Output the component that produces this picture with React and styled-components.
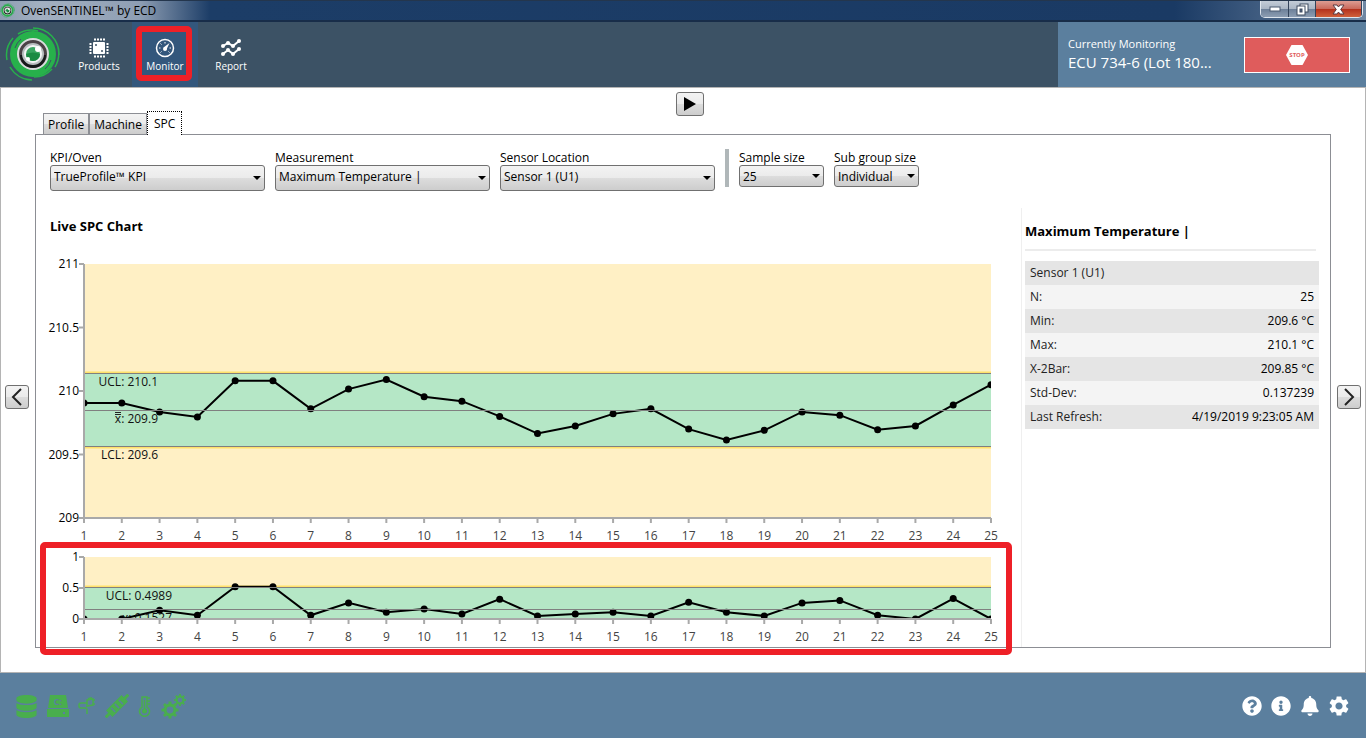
import { useState } from "react";
import styled, { createGlobalStyle } from "styled-components";
import { FaBell, FaDatabase, FaInfoCircle, FaQuestionCircle } from "react-icons/fa";
import { MdSettings } from "react-icons/md";

const TEMPERATURES = [
  209.905, 209.905, 209.835, 209.795, 210.08, 210.08, 209.86, 210.015, 210.09, 209.955, 209.92, 209.8, 209.665,
  209.725, 209.82, 209.86, 209.7, 209.615, 209.69, 209.835, 209.81, 209.695, 209.725, 209.89, 210.05,
];
const RANGES = [
  0, 0, 0.14, 0.06, 0.52, 0.52, 0.06, 0.26, 0.11, 0.16, 0.08, 0.32, 0.05, 0.08, 0.11, 0.05, 0.27, 0.11, 0.05, 0.26,
  0.3, 0.06, 0, 0.33, 0,
];
const STATS = [
  ["N:", "25"],
  ["Min:", "209.6 °C"],
  ["Max:", "210.1 °C"],
  ["X-2Bar:", "209.85 °C"],
  ["Std-Dev:", "0.137239"],
  ["Last Refresh:", "4/19/2019 9:23:05 AM"],
];

const LEFT = 48;
const RIGHT = 955;

export default function App() {
  const [tab, setTab] = useState("SPC");

  return (
    <Page>
      <GlobalStyle />
      <TitleBar>
        <Logo size={15} />
        <Title>OvenSENTINEL™ by ECD</Title>
        <WindowButtons>
          <WindowButton aria-label="Minimize" $width={28}>
            <svg width="12" height="6">
              <rect x="1" y="1" width="10" height="4" fill="#fff" stroke="#4b5a70" />
            </svg>
          </WindowButton>
          <WindowButton aria-label="Restore" $width={27}>
            <svg width="13" height="13">
              <rect x="4" y="1" width="8" height="8" fill="#fff" stroke="#3f4c60" />
              <rect x="1" y="3" width="8" height="9" fill="#fff" stroke="#3f4c60" />
              <rect x="4" y="6" width="2" height="3" fill="#4f6282" stroke="#3f4c60" />
            </svg>
          </WindowButton>
          <WindowButton aria-label="Close" $width={46} $close>
            <svg width="13" height="11">
              <path d="M1 1h4l1.500 2L8 1h4L8.700 5.500 12 10H8L6.500 8 5 10H1l3.300-4.500z" fill="#fff" stroke="#5a3a42" />
            </svg>
          </WindowButton>
        </WindowButtons>
      </TitleBar>

      <Header>
        <Brand>
          <Logo size={56} />
        </Brand>
        <Nav>
          <NavButton>
            <ChipIcon />
            Products
          </NavButton>
          <NavButton $active>
            <GaugeIcon />
            Monitor
            <Highlight $inset="4px 6px 6px 4px" />
          </NavButton>
          <NavButton>
            <ReportIcon />
            Report
          </NavButton>
        </Nav>
        <Monitoring>
          <div>
            <MonitoringLabel>Currently Monitoring</MonitoringLabel>
            <MonitoringName>ECU 734-6 (Lot 180...</MonitoringName>
          </div>
          <StopButton aria-label="Stop">
            <svg width="22" height="22" viewBox="0 0 22 22">
              <path d="M5.500 1h11L22 11l-5.500 10h-11L0 11z" fill="#fff" />
              <text x="11" y="13" textAnchor="middle" fontSize="6" fontWeight="700" fill="#df5c5c">
                STOP
              </text>
            </svg>
          </StopButton>
        </Monitoring>
      </Header>

      <Main>
        <PlayButton aria-label="Play">
          <svg width="14" height="14">
            <path d="M1 0v14l12-7z" />
          </svg>
        </PlayButton>
        <Tabs role="tablist">
          {["Profile", "Machine", "SPC"].map((name) => (
            <Tab key={name} role="tab" aria-selected={tab === name} $active={tab === name} onClick={() => setTab(name)}>
              {name}
            </Tab>
          ))}
        </Tabs>
        <ArrowButton aria-label="Previous" $side="start">
          <svg width="12" height="18" fill="none" stroke="#222" strokeWidth="2">
            <path d="M10 1L2 9l8 8" />
          </svg>
        </ArrowButton>
        <Panel>
          <Filters>
            <Field id="kpi" label="KPI/Oven" options={["TrueProfile™ KPI"]} />
            <Field id="measurement" label="Measurement" options={["Maximum Temperature |"]} />
            <Field id="sensor" label="Sensor Location" options={["Sensor 1 (U1)"]} />
            <Divider />
            <Field id="sample" label="Sample size" options={["25"]} small />
            <Field id="subgroup" label="Sub group size" options={["Individual"]} small />
          </Filters>
          <Columns>
            <Charts>
              <ChartTitle>Live SPC Chart</ChartTitle>
              <ControlChart
                name="individuals"
                data={TEMPERATURES}
                height={295}
                top={14}
                bottom={268}
                min={209}
                max={211}
                ticks={[209, 209.5, 210, 210.5, 211]}
                ucl={210.14}
                lcl={209.565}
                mean={209.85}
                uclLabel="UCL: 210.1"
                lclLabel="LCL: 209.6"
                meanLabel="x: 209.9"
                labelX={122}
              />
              <RangeBox>
                <ControlChart
                  name="ranges"
                  data={RANGES}
                  height={102}
                  top={12}
                  bottom={74}
                  min={0}
                  max={1}
                  ticks={[0, 0.5, 1]}
                  ucl={0.51}
                  mean={0.155}
                  uclLabel="UCL: 0.4989"
                  meanLabel="x: 0.1527"
                  labelX={136}
                />
                <Highlight $inset="-3px 9px -8px 4px" />
              </RangeBox>
            </Charts>
            <Side>
              <SideTitle>Maximum Temperature |</SideTitle>
              <Stats>
                <tbody>
                  <tr>
                    <th colSpan={2}>Sensor 1 (U1)</th>
                  </tr>
                  {STATS.map(([label, value]) => (
                    <tr key={label}>
                      <th scope="row">{label}</th>
                      <td>{value}</td>
                    </tr>
                  ))}
                </tbody>
              </Stats>
            </Side>
          </Columns>
        </Panel>
        <ArrowButton aria-label="Next" $side="end">
          <svg width="12" height="18" fill="none" stroke="#222" strokeWidth="2">
            <path d="M2 1l8 8-8 8" />
          </svg>
        </ArrowButton>
      </Main>

      <Footer>
        <StatusIcons>
          <FaDatabase size={23} />
          <DriveIcon />
          <PlugIcon />
          <ConnectorIcon />
          <ThermometerIcon />
          <GearsIcon />
        </StatusIcons>
        <FooterActions>
          <IconButton aria-label="Help">
            <FaQuestionCircle size={20} />
          </IconButton>
          <IconButton aria-label="Information">
            <FaInfoCircle size={20} />
          </IconButton>
          <IconButton aria-label="Notifications">
            <FaBell size={20} />
          </IconButton>
          <IconButton aria-label="Settings">
            <MdSettings size={24} />
          </IconButton>
        </FooterActions>
      </Footer>
    </Page>
  );
}

const Field = ({ id, label, options, small }) => (
  <FieldBox $small={small}>
    <label htmlFor={id}>{label}</label>
    <SelectBox $small={small}>
      <Select id={id} $small={small}>
        {options.map((option) => (
          <option key={option}>{option}</option>
        ))}
      </Select>
    </SelectBox>
  </FieldBox>
);

const ControlChart = ({
  name,
  data,
  height,
  top,
  bottom,
  min,
  max,
  ticks,
  ucl,
  lcl = min,
  mean,
  uclLabel,
  lclLabel,
  meanLabel,
  labelX,
}) => {
  const x = (i) => LEFT + (i * (RIGHT - LEFT)) / (data.length - 1);
  const y = (value) => bottom - ((value - min) / (max - min)) * (bottom - top);
  const line = (value) => Math.round(y(value)) + 0.5;
  const hasLower = lcl > min;

  return (
    <ChartSvg viewBox={`0 0 985 ${height}`} role="img" aria-label={name}>
      <clipPath id={name}>
        <rect x={LEFT} y={top} width={RIGHT - LEFT} height={bottom - top} />
      </clipPath>
      <rect x={LEFT} y={top} width={RIGHT - LEFT} height={bottom - top} fill="#fff0c5" />
      <rect x={LEFT} y={y(ucl)} width={RIGHT - LEFT} height={y(lcl) - y(ucl)} fill="#b5e7c6" />
      <rect x={LEFT} y={line(ucl) - 2} width={RIGHT - LEFT} height="2" fill="#ffe16b" />
      {hasLower && <rect x={LEFT} y={line(lcl)} width={RIGHT - LEFT} height="2" fill="#ffe16b" />}
      <g clipPath={`url(#${name})`}>
        <polyline
          points={data.map((value, i) => `${x(i)},${y(value)}`).join(" ")}
          fill="none"
          stroke="#000"
          strokeWidth="2"
        />
        {data.map((value, i) => (
          <circle key={i} cx={x(i)} cy={y(value)} r="3.500" />
        ))}
        <g textAnchor="end" fill="#111">
          <text x={labelX} y={line(ucl) + 12}>
            {uclLabel}
          </text>
          <text x={labelX} y={line(mean) + 12}>
            {meanLabel}
          </text>
          {hasLower && (
            <text x={labelX} y={line(lcl) + 12}>
              {lclLabel}
            </text>
          )}
        </g>
        {hasLower && <path d={`M79 ${line(mean) + 2}h6m-6 2h6`} stroke="#222" />}
      </g>
      <g stroke="#808080">
        <path d={`M${LEFT} ${line(ucl)}H${RIGHT}M${LEFT} ${line(mean)}H${RIGHT}`} />
        {hasLower && <path d={`M${LEFT} ${line(lcl)}H${RIGHT}`} />}
      </g>
      <path d={`M${LEFT} ${top}V${bottom}H${RIGHT}`} fill="none" stroke="#a9a9a9" strokeWidth="2" />
      {ticks.map((tick) => (
        <g key={tick}>
          <path d={`M${LEFT - 5} ${y(tick)}h5`} stroke="#a9a9a9" strokeWidth="2" />
          <text x={LEFT - 5} y={y(tick) + 4} textAnchor="end">
            {tick}
          </text>
        </g>
      ))}
      {data.map((_, i) => (
        <g key={i}>
          <path d={`M${x(i)} ${bottom}v5`} stroke="#a9a9a9" strokeWidth="2" />
          <text x={x(i)} y={bottom + 22} textAnchor="middle" fill="#444">
            {i + 1}
          </text>
        </g>
      ))}
    </ChartSvg>
  );
};

const Logo = ({ size }) => (
  <svg width={size} height={size} viewBox="0 0 56 56" fill="none">
    <circle cx="28" cy="28" r="19" stroke="#27b14b" strokeWidth="8" />
    <path
      d="M28 2A26 26 0 0 1 54 29M50 14A26 26 0 0 1 50 41M27 54A26 26 0 0 1 5 41M2 34A26 26 0 0 1 8 12M13 8A25 25 0 0 1 33 5M47 43A24 24 0 0 1 29 51"
      stroke="#27b14b"
      strokeWidth="1.500"
    />
    <path d="M10 22A19 19 0 0 1 16 13M46 34A19 19 0 0 1 40 43" stroke="#3c5265" />
    <circle cx="28" cy="28" r="15" fill="#4b4246" stroke="#d9dcdd" strokeWidth="2" />
    <path d="M15 29a13 13 0 0 0 26 0z" fill="#17191b" />
    <circle cx="28" cy="28" r="10" fill="#f3f5f5" stroke="#b9bec0" strokeWidth="2" />
    <circle cx="28" cy="28" r="7" fill="#3aa561" />
    <path d="M21 28a7 7 0 0 0 14 0q-7-3-14 0z" fill="#1b8a43" />
    <circle cx="33" cy="23" r="3" fill="#fff" />
    <circle cx="23" cy="33" r="2" fill="#fff" />
  </svg>
);

const ChipIcon = () => (
  <svg width="20" height="20" viewBox="0 0 20 20">
    <rect x="4" y="4" width="12" height="12" rx="1" fill="#fff" />
    <path d="M5 1.500h11M5 18.500h11M1.500 5v11M18.500 5v11" stroke="#fff" strokeWidth="2" strokeDasharray="2 1" />
    <circle cx="7" cy="7" r="1" fill="#3c5265" />
    <circle cx="13" cy="13" r="1" fill="#3c5265" />
  </svg>
);

const GaugeIcon = () => (
  <svg width="20" height="20" viewBox="0 0 20 20" fill="none" stroke="#fff">
    <circle cx="10" cy="10" r="8.500" strokeWidth="1.500" />
    <path d="M4 10h1.500M5.500 5.500l1 1M10 4v1.500M16 10h-1.500M5.500 14.500l1-1M14.500 14.500l-1-1" />
    <path d="M14.500 5l-3 6.500-3-2z" fill="#fff" stroke="none" />
    <circle cx="10" cy="11" r="2" fill="#fff" stroke="none" />
  </svg>
);

const ReportIcon = () => (
  <svg width="20" height="20" viewBox="0 0 20 20" fill="#fff">
    <path d="M2 8l5-3 5 3 6-5M2 16l5-4 5 4 6-5" fill="none" stroke="#fff" strokeWidth="2" />
    {[
      [2, 8],
      [7, 5],
      [12, 8],
      [18, 3],
      [2, 16],
      [7, 12],
      [12, 16],
      [18, 11],
    ].map(([cx, cy]) => (
      <circle key={`${cx}-${cy}`} cx={cx} cy={cy} r="2" />
    ))}
  </svg>
);

const DriveIcon = () => (
  <svg width="22" height="22" viewBox="0 0 22 22">
    <path d="M3 0h16l2 13H1zM0 14h22v8H0z" />
    <text x="11" y="10" textAnchor="middle" fontSize="9" fontWeight="700" fill="#5b7f9e">
      C:
    </text>
    <path d="M16 18h2" stroke="#5b7f9e" strokeWidth="2" />
  </svg>
);

const PlugIcon = () => (
  <svg width="18" height="18" viewBox="0 0 18 18" fill="none" stroke="currentColor" strokeWidth="1.500">
    <path d="M9 6H3a2 2 0 0 0-2 2v1q0 2 2 2h4q2 0 2 2v4M9 3l6-1v6l-6 1zM15 3h2M15 7h2" />
    <path d="M10 2l4-1" strokeWidth="2" />
  </svg>
);

const ConnectorIcon = () => (
  <svg width="24" height="24" viewBox="0 0 24 24">
    <g transform="rotate(-45 12 12)">
      <path d="M-4 10.500h5v-3h22v3h5v3h-5v3H1v-3h-5z" />
      <path d="M6.500 9v6M12 9v6M17.500 9v6" stroke="#5b7f9e" strokeWidth="1.500" />
    </g>
  </svg>
);

const ThermometerIcon = () => (
  <svg width="14" height="22" viewBox="0 0 14 22" fill="none" stroke="currentColor" strokeWidth="1.500">
    <path d="M4 2h5v10a5 5 0 1 1-5 0zM6.500 5v10M9 3h3M9 6h3M9 9h3" />
    <circle cx="6.500" cy="16" r="2.500" fill="currentColor" stroke="none" />
  </svg>
);

const Gear = ({ cx, cy, r }) => (
  <g transform={`translate(${cx} ${cy})`}>
    <circle r={r * 0.58} strokeWidth={r * 0.36} />
    {[0, 45, 90, 135, 180, 225, 270, 315].map((angle) => (
      <path key={angle} d={`M0 ${-r * 0.7}V${-r}`} strokeWidth={r * 0.34} transform={`rotate(${angle})`} />
    ))}
  </g>
);

const GearsIcon = () => (
  <svg width="26" height="26" viewBox="0 0 26 26" fill="none" stroke="currentColor">
    <Gear cx={9} cy={17} r={8.5} />
    <Gear cx={19} cy={7} r={6} />
  </svg>
);

const GlobalStyle = createGlobalStyle`
  * {
    box-sizing: border-box;
  }
  body {
    margin: 0;
    color: #000;
    font-family: "Open Sans", "Noto Sans", sans-serif;
    font-size: 12px;
    line-height: 16px;
  }
  button,
  select {
    color: inherit;
    font: inherit;
  }
`;

const Page = styled.div`
  display: flex;
  flex-direction: column;
  min-height: 100vh;
  background-color: #5b7f9e;
`;

const TitleBar = styled.div`
  display: flex;
  align-items: center;
  gap: 6px;
  height: 22px;
  border-top: 1px solid #24364d;
  border-bottom: 2px solid #182d49;
  background: linear-gradient(90deg, #8d9db2, #a3b0c1 40px, #8e9eb3 140px, #1c3d67 210px, #1a3a64 86%, #6f87a3);
`;

const Title = styled.div`
  flex: 1;
`;

const WindowButtons = styled.div`
  display: flex;
  align-self: flex-start;
  margin-right: 3px;
  border: 1px solid #dfe6ee;
  border-top: none;
  border-radius: 0 0 5px 5px;
  overflow: hidden;
`;

const WindowButton = styled.button`
  display: flex;
  align-items: center;
  justify-content: center;
  width: ${({ $width }) => $width}px;
  height: 16px;
  padding: 0;
  border: none;
  border-right: 1px solid #33435a;
  background: ${({ $close }) =>
    $close
      ? "linear-gradient(#dd9d93, #c9685a 50%, #b3301c 50%, #d0603a)"
      : "linear-gradient(#c3ccd7, #a9b5c4 50%, #6c7f98 50%, #8c9db2)"};
`;

const Header = styled.header`
  display: flex;
  height: 65px;
  background-color: #3c5265;
`;

const Brand = styled.div`
  display: flex;
  align-items: center;
  padding: 0 5px 2px;
`;

const Nav = styled.nav`
  display: flex;
  flex: 1;
`;

const NavButton = styled.button`
  position: relative;
  display: flex;
  flex-direction: column;
  align-items: center;
  width: 66px;
  padding: 16px 0 0;
  border: none;
  color: white;
  font-size: 10px;
  font-weight: 500;
  background-color: ${({ $active }) => ($active ? "#33577c" : "transparent")};
`;

const Highlight = styled.div`
  position: absolute;
  inset: ${({ $inset }) => $inset};
  border: 6px solid #ee2027;
  border-radius: 5px;
  pointer-events: none;
`;

const Monitoring = styled.div`
  display: flex;
  align-items: center;
  justify-content: space-between;
  width: 308px;
  padding: 0 16px 0 10px;
  color: white;
  background-color: #5b7f9e;
`;

const MonitoringLabel = styled.div`
  font-size: 11px;
`;

const MonitoringName = styled.div`
  padding-bottom: 2px;
  font-size: 15px;
  line-height: 20px;
`;

const StopButton = styled.button`
  display: flex;
  align-items: center;
  justify-content: center;
  width: 106px;
  height: 36px;
  padding: 0;
  border: 1px solid white;
  background-color: #df5c5c;
`;

const Main = styled.main`
  display: grid;
  flex: 1;
  grid-template-columns: 34px minmax(0, 1fr) 34px;
  grid-template-rows: 46px auto;
  align-items: start;
  padding-bottom: 24px;
  border: 1px solid #b4b4b4;
  background-color: white;
`;

const GreyButton = styled.button`
  display: flex;
  align-items: center;
  justify-content: center;
  height: 24px;
  padding: 0;
  border: 1px solid #707070;
  border-radius: 3px;
  background: linear-gradient(#f3f3f3, #ebebeb 50%, #dddddd 50%, #cdcdcd);
`;

const PlayButton = styled(GreyButton)`
  grid-row: 1;
  grid-column: 1 / -1;
  justify-self: center;
  width: 28px;
  margin: 4px 0 0 14px;
`;

const ArrowButton = styled(GreyButton)`
  grid-row: 2;
  align-self: center;
  justify-self: ${({ $side }) => $side};
  width: 24px;
  margin: 12px 4px 0;
`;

const Tabs = styled.div`
  z-index: 1;
  display: flex;
  grid-row: 1;
  grid-column: 2;
  align-items: flex-end;
  align-self: end;
  justify-self: start;
  margin-left: 8px;
`;

const Tab = styled.button`
  height: ${({ $active }) => ($active ? 24 : 21)}px;
  margin-bottom: ${({ $active }) => ($active ? -1 : 0)}px;
  padding: ${({ $active }) => ($active ? "0 6px" : "2px 4px 0")};
  border: 1px ${({ $active }) => ($active ? "dotted #000" : "solid #8c8e94")};
  border-bottom: none;
  background: ${({ $active }) =>
    $active ? "white" : "linear-gradient(#f3f3f3, #ebebeb 50%, #dddddd 50%, #cdcdcd)"};
`;

const Panel = styled.section`
  grid-row: 2;
  grid-column: 2;
  border: 1px solid #8c8e94;
`;

const Filters = styled.div`
  display: flex;
  flex-wrap: wrap;
  gap: 10px;
  padding: 14px 14px 0;
`;

const FieldBox = styled.div`
  width: ${({ $small }) => ($small ? 85 : 215)}px;

  label {
    display: block;
    height: 16px;
    line-height: 18px;
  }
`;

const SelectBox = styled.div`
  position: relative;

  &::after {
    content: "";
    position: absolute;
    top: ${({ $small }) => ($small ? 9 : 11)}px;
    right: 4px;
    border: 4px solid transparent;
    border-top-color: #000;
    pointer-events: none;
  }
`;

const Select = styled.select`
  display: block;
  width: 100%;
  height: ${({ $small }) => ($small ? 22 : 26)}px;
  padding: ${({ $small }) => ($small ? "1px 12px 0 3px" : "0 12px 2px 3px")};
  border: 1px solid #707070;
  border-radius: 3px;
  appearance: none;
  background: linear-gradient(#f3f3f3, #ebebeb 50%, #dddddd 50%, #cdcdcd);
`;

const Divider = styled.div`
  width: 4px;
  height: 38px;
  background-color: #b0b7b9;
`;

const Columns = styled.div`
  display: grid;
  grid-template-columns: minmax(0, 1fr) 309px;
  margin-top: 17px;
`;

const Charts = styled.div`
  padding-top: 10px;
`;

const ChartTitle = styled.h2`
  margin: 0;
  padding: 0 14px 16px;
  font-size: 13px;
  line-height: 16px;
`;

const ChartSvg = styled.svg`
  display: block;
  width: 100%;
`;

const RangeBox = styled.div`
  position: relative;
`;

const Side = styled.aside`
  padding: 15px 11px 0 3px;
  border-left: 1px solid #efefef;
`;

const SideTitle = styled.h2`
  margin: 0 3px 10px 0;
  padding-bottom: 10px;
  border-bottom: 2px solid #ececec;
  font-size: 13px;
  line-height: 16px;
`;

const Stats = styled.table`
  width: 100%;
  border-collapse: collapse;

  tr {
    height: 24px;
    background-color: #f4f4f4;
  }
  tr:nth-child(odd) {
    background-color: #e5e5e5;
  }
  th {
    padding: 0 5px;
    color: #222;
    font-weight: normal;
    text-align: left;
  }
  td {
    padding: 0 5px;
    text-align: right;
  }
`;

const Footer = styled.footer`
  display: flex;
  align-items: center;
  justify-content: space-between;
  height: 66px;
  padding: 0 17px 0 15px;
`;

const StatusIcons = styled.div`
  display: flex;
  align-items: center;
  gap: 9px;
  color: #49ae4d;

  svg {
    fill: currentColor;
  }
  svg[fill="none"] {
    fill: none;
  }
`;

const FooterActions = styled.div`
  display: flex;
  align-items: center;
  gap: 9px;
`;

const IconButton = styled.button`
  display: flex;
  align-items: center;
  justify-content: center;
  width: 20px;
  padding: 0;
  border: none;
  color: white;
  background: none;

  svg {
    flex-shrink: 0;
  }
`;
